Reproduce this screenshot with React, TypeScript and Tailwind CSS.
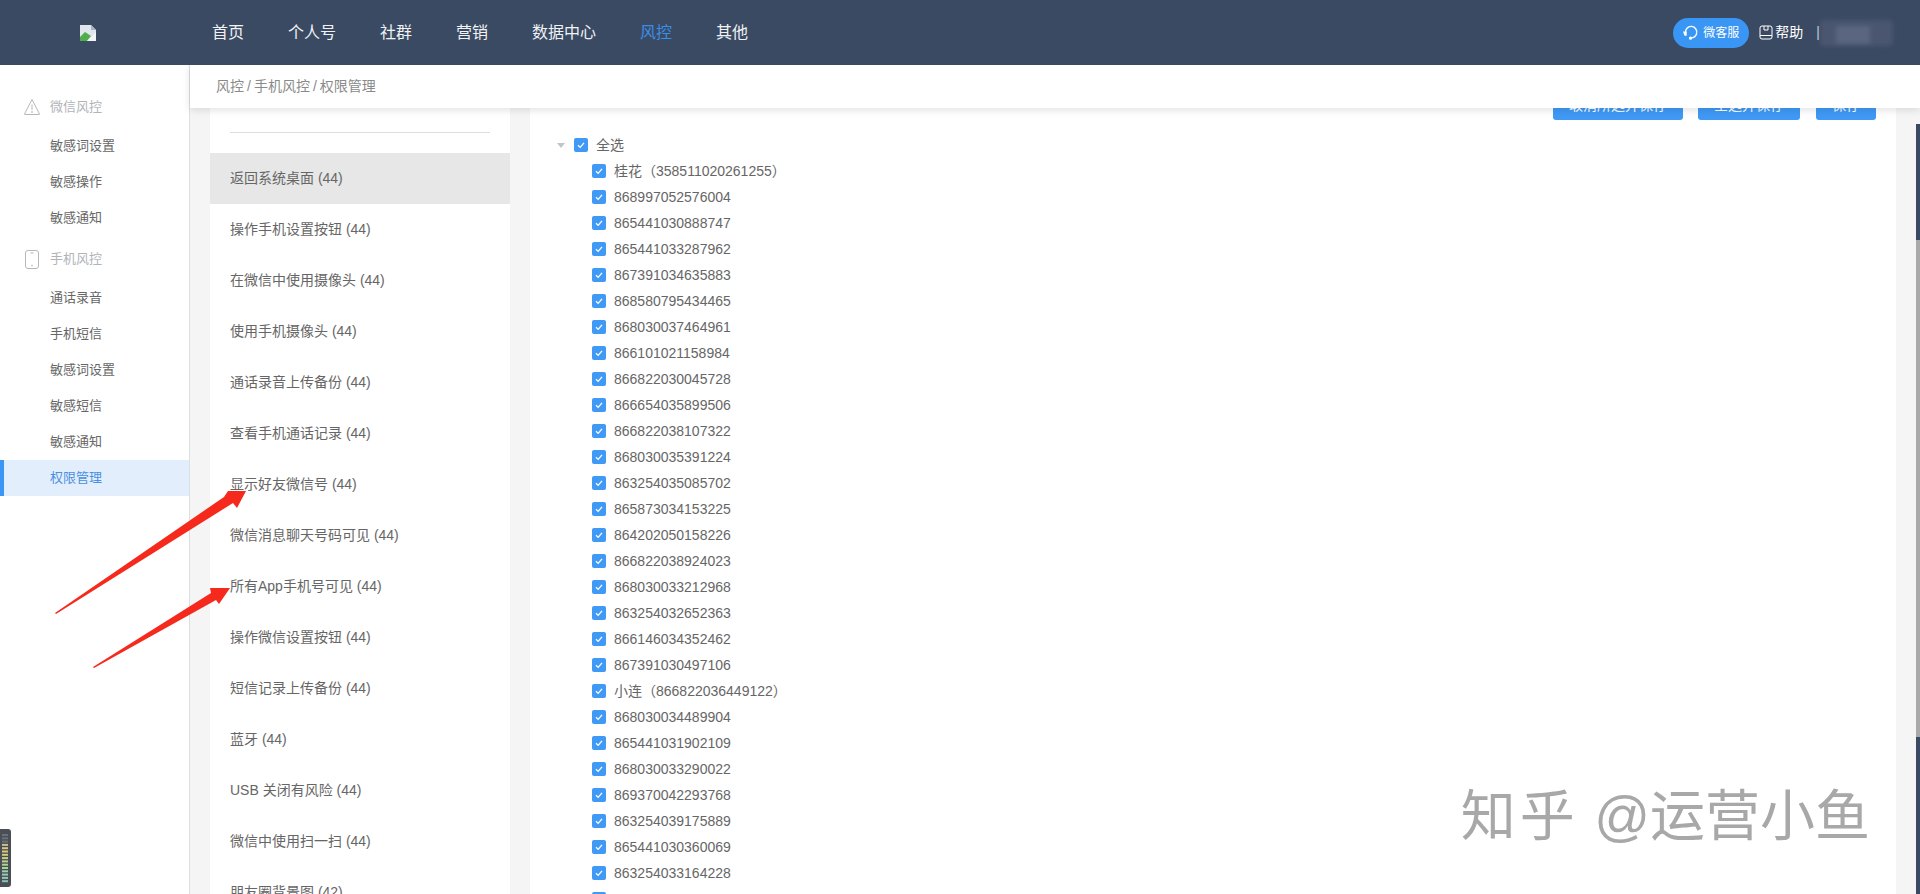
import React, { FC } from "react";

const navItems = ["首页", "个人号", "社群", "营销", "数据中心", "风控", "其他"];
const wechatItems = ["敏感词设置", "敏感操作", "敏感通知"];
const phoneItems = ["通话录音", "手机短信", "敏感词设置", "敏感短信", "敏感通知", "权限管理"];
const permissions = [
  "返回系统桌面 (44)",
  "操作手机设置按钮 (44)",
  "在微信中使用摄像头 (44)",
  "使用手机摄像头 (44)",
  "通话录音上传备份 (44)",
  "查看手机通话记录 (44)",
  "显示好友微信号 (44)",
  "微信消息聊天号码可见 (44)",
  "所有App手机号可见 (44)",
  "操作微信设置按钮 (44)",
  "短信记录上传备份 (44)",
  "蓝牙 (44)",
  "USB 关闭有风险 (44)",
  "微信中使用扫一扫 (44)",
  "朋友圈背景图 (42)",
];
const devices = [
  "桂花（358511020261255）",
  "868997052576004",
  "865441030888747",
  "865441033287962",
  "867391034635883",
  "868580795434465",
  "868030037464961",
  "866101021158984",
  "866822030045728",
  "866654035899506",
  "866822038107322",
  "868030035391224",
  "863254035085702",
  "865873034153225",
  "864202050158226",
  "866822038924023",
  "868030033212968",
  "863254032652363",
  "866146034352462",
  "867391030497106",
  "小连（866822036449122）",
  "868030034489904",
  "865441031902109",
  "868030033290022",
  "869370042293768",
  "863254039175889",
  "865441030360069",
  "863254033164228",
  "",
];
const meterColors = ["#6b7078", "#6b7078", "#6b7078", "#c9c08a", "#d9c77a", "#d9c77a", "#d6cd78", "#c9d07c", "#bcd484", "#aed68e", "#a4d69a", "#9ad4a6", "#90d0ae", "#8ccab4", "#8ac4b8"];

const Check: FC = () => (
  <span className="flex h-[14px] w-[14px] shrink-0 items-center justify-center rounded-[2px] bg-[#3f99f5]">
    <svg width="10" height="10" viewBox="0 0 10 10" fill="none">
      <path d="M2 5.2 L4.2 7.4 L8 2.8" stroke="#fff" strokeWidth="1.3" />
    </svg>
  </span>
);

const WarnIcon: FC = () => (
  <svg width="18" height="18" viewBox="0 0 18 18" fill="none" stroke="#b4b8bd" strokeWidth="1">
    <path d="M9 1.5 L16.5 16 Q16.6 16.5 16 16.5 H2 Q1.4 16.5 1.5 16 Z" strokeLinejoin="round" />
    <path d="M9 6.5 V12" />
    <circle cx="9" cy="14" r="0.5" />
  </svg>
);

const PhoneIcon: FC = () => (
  <svg width="16" height="19" viewBox="0 0 16 19" fill="none" stroke="#b4b8bd" strokeWidth="1">
    <rect x="1.5" y="0.5" width="13" height="18" rx="2.5" />
    <path d="M6.5 3 H9.5" />
    <circle cx="8" cy="15.5" r="0.5" />
  </svg>
);

const BrokenImage: FC = () => (
  <svg width="16" height="16" viewBox="0 0 16 16">
    <path d="M0 0 H11 L16 5 V16 H0 Z" fill="#dfe6ee" />
    <path d="M11 0 L16 5 H11 Z" fill="#a9b4c2" />
    <path d="M0 16 L0 12 L5 7 L11 11 L7 16 Z" fill="#4fae4a" />
    <path d="M7 16 L16 7 V16 Z" fill="#f2f4f7" />
  </svg>
);

const Headset: FC = () => (
  <svg width="16" height="16" viewBox="0 0 16 16" fill="none" stroke="#fff" strokeWidth="1.4">
    <path d="M2.5 8 A5.7 5.7 0 1 1 13.5 9 C12.6 11.6 10.8 12.8 8 13" />
    <path d="M1 7.2 H3 V10 H2 Z" fill="#fff" />
    <circle cx="7.5" cy="13.2" r="0.9" fill="#fff" />
  </svg>
);

const BookIcon: FC = () => (
  <svg width="14" height="15" viewBox="0 0 14 15" fill="none" stroke="#fff" strokeWidth="1">
    <rect x="1" y="1" width="12" height="13" rx="2" />
    <path d="M1 10.5 H13" />
    <path d="M5 1 V5 H9 V1" />
  </svg>
);

const App: FC = () => {
  return (
    <div className="relative flex h-[894px] w-[1920px] flex-col overflow-hidden bg-white font-['Liberation_Sans','Noto_Sans_CJK_SC',sans-serif] text-[14px] text-[#666]">
      <header className="relative z-20 flex h-[65px] shrink-0 items-center bg-[#3b4a63] pr-[27px]">
        <div className="flex w-[191px] shrink-0 justify-center pr-[15px]">
          <BrokenImage />
        </div>
        <nav className="ml-[21px] flex flex-1 gap-[44px] text-[16px] text-[#f0f2f5]">
          {navItems.map((item) => (
            <span key={item} className={item === "风控" ? "text-[#3a8ee6]" : ""}>
              {item}
            </span>
          ))}
        </nav>
        <div className="flex items-center">
          <button className="flex h-[30px] w-[76px] items-center justify-center gap-[4px] rounded-full bg-[#3a96f5] text-[12px] text-white">
            <Headset />
            微客服
          </button>
          <div className="ml-[10px] flex items-center gap-[2px] text-white">
            <BookIcon />
            帮助
          </div>
          <span className="ml-[13px] text-[#dfe3ea]">|</span>
          <div className="relative h-[26px] w-[73px] rounded-[4px] bg-[#4a566f] blur-[2px]">
            <div className="absolute left-[16px] top-[6px] h-[18px] w-[34px] bg-[#5a6580]" />
          </div>
        </div>
      </header>

      <div className="flex min-h-0 flex-1">
        <aside className="w-[190px] shrink-0 border-r border-[#dcdfe3] pt-[24px] text-[13px]">
          <div className="mb-[3px] flex h-[36px] items-center gap-[8px] pl-[22px] text-[#b0b4b9]">
            <span className="flex w-[20px] justify-center">
              <WarnIcon />
            </span>
            微信风控
          </div>
          {wechatItems.map((item) => (
            <div key={item} className="flex h-[36px] items-center pl-[50px]">
              {item}
            </div>
          ))}
          <div className="mb-[3px] mt-[5px] flex h-[36px] items-center gap-[8px] pl-[22px] text-[#b0b4b9]">
            <span className="flex w-[20px] justify-center">
              <PhoneIcon />
            </span>
            手机风控
          </div>
          {phoneItems.map((item) =>
            item === "权限管理" ? (
              <div key={item} className="flex h-[36px] items-center border-l-4 border-[#3a96f5] bg-[#e3eefc] pl-[46px] text-[#4a90e2]">
                {item}
              </div>
            ) : (
              <div key={item} className="flex h-[36px] items-center pl-[50px]">
                {item}
              </div>
            )
          )}
        </aside>

        <div className="flex min-w-0 flex-1 flex-col">
          <div className="relative z-10 flex h-[43px] shrink-0 items-center bg-white pl-[26px] text-[#8a8a8a] shadow-[0_2px_8px_rgba(0,0,0,0.12)]">
            风控<span className="mx-[3px]">/</span>手机风控<span className="mx-[3px]">/</span>权限管理
          </div>
          <div className="flex min-h-0 flex-1 gap-[20px] overflow-hidden bg-[#f5f5f5] pl-[20px]">
            <section className="w-[300px] shrink-0 bg-white pt-[24px]">
              <div className="mx-[20px] mb-[20px] h-px bg-[#dedede]" />
              {permissions.map((item, i) => (
                <div key={item} className={"flex h-[51px] items-center pl-[20px] " + (i === 0 ? "bg-[#e7e7e7]" : "")}>
                  {item}
                </div>
              ))}
            </section>

            <section className="-mt-[18px] min-w-0 flex-1 bg-white">
              <div className="flex justify-end gap-[15px] pr-[20px]">
                <button className="h-[30px] w-[130px] rounded-[3px] bg-[#3f99f5] text-white">取消所选并保存</button>
                <button className="h-[30px] w-[102px] rounded-[3px] bg-[#3f99f5] text-white">全选并保存</button>
                <button className="ml-px h-[30px] w-[60px] rounded-[3px] bg-[#3f99f5] text-white">保存</button>
              </div>
              <div className="mt-[12px] pl-[27px]">
                <div className="flex h-[26px] items-center">
                  <span className="mr-[9px] h-0 w-0 border-x-[4px] border-t-[5px] border-x-transparent border-t-[#c0c4cc]" />
                  <Check />
                  <span className="ml-[8px]">全选</span>
                </div>
                {devices.map((item, i) => (
                  <div key={i} className="flex h-[26px] items-center pl-[35px]">
                    <Check />
                    <span className="ml-[8px]">{item}</span>
                  </div>
                ))}
              </div>
            </section>

            <div className="mt-[16px] flex w-[4px] shrink-0 flex-col bg-[#3b4a63]">
              <div className="mt-[116px] h-[497px] bg-[#a9a9a9]" />
            </div>
          </div>
        </div>
      </div>

      <div className="absolute left-0 top-[829px] z-20 h-[58px] w-[11px] rounded-r-[3px] bg-[#4a4e55]">
        <svg width="8" height="50" viewBox="0 0 8 50" className="ml-[1px] mt-[5px]">
          {meterColors.map((c, i) => (
            <rect key={i} x="1" y={i * 3.3} width="6" height="2" fill={c} />
          ))}
        </svg>
      </div>

      <div className="absolute right-[50px] top-[778px] z-20 text-[55px] leading-[76px] text-[#a8a8a8]">
        <span className="tracking-[4px]">知乎</span> @运营小鱼
      </div>

      <svg className="pointer-events-none absolute left-0 top-0 z-20" width="300" height="700" viewBox="0 0 300 700">
        <polygon points="55,613 224,497 228,491 246,491 237,508 233,503 56,614" fill="#f5291c" />
        <polygon points="93,667 211,593 210,588 230,588 219,604 216,600 94,668" fill="#f5291c" />
      </svg>
    </div>
  );
};

export default App;
